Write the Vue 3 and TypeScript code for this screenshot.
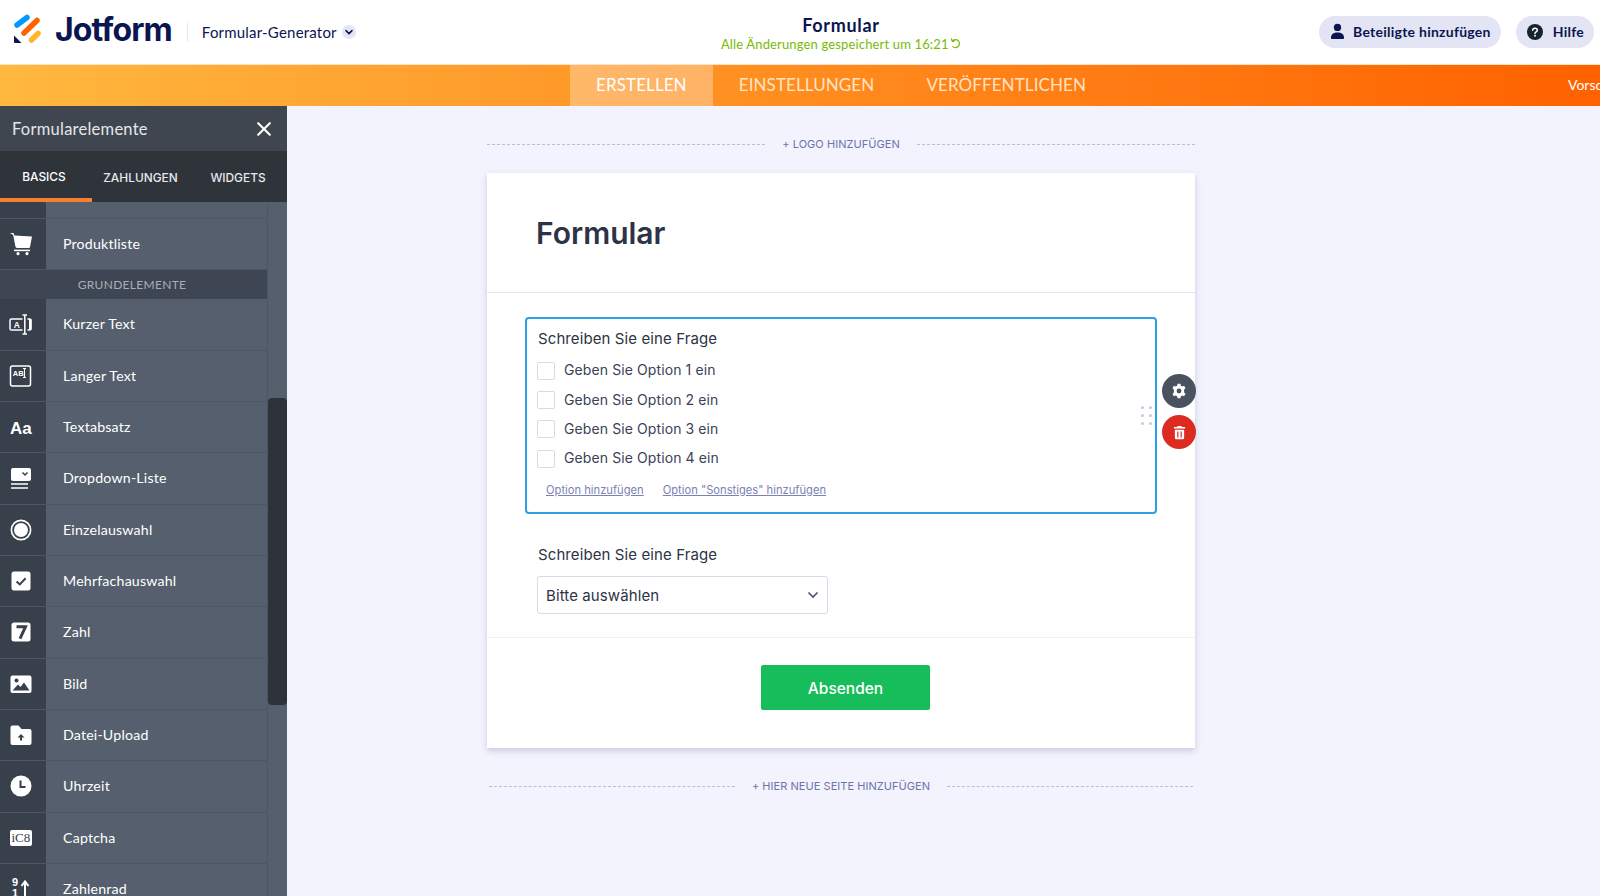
<template>
  <div class="page">
    <header class="topbar">
      <div class="brand">
        <svg class="logo" viewBox="0 0 28 30" width="28" height="30">
          <line x1="4" y1="11" x2="14" y2="3.5" stroke="#0099ff" stroke-width="5.5" stroke-linecap="round" />
          <line x1="11" y1="19" x2="24" y2="6.5" stroke="#ff6100" stroke-width="5.5" stroke-linecap="round" />
          <line x1="18.5" y1="26" x2="25" y2="19.5" stroke="#ffb629" stroke-width="5.5" stroke-linecap="round" />
          <path d="M1 21.5 L1 28 Q1 29 2 29 L8.5 29 Z" fill="#0a1551" />
        </svg>
        <span class="wordmark">Jotform</span>
        <span class="brand-sep"></span>
        <span class="builder">Formular-Generator</span>
        <span class="builder-chevron">
          <svg viewBox="0 0 14 14" width="14" height="14"><path d="M4 5.6 L7 8.6 L10 5.6" fill="none" stroke="#0a1551" stroke-width="1.5" stroke-linecap="round" stroke-linejoin="round" /></svg>
        </span>
      </div>
      <div class="doc-title">
        <div class="doc-name">Formular</div>
        <div class="doc-status">
          Alle Änderungen gespeichert um 16:21
          <svg class="saved-icon" viewBox="0 0 12 12" width="11" height="11"><path d="M2.6 3.2 A4.4 4.4 0 1 1 3 9.4 M1.6 1 L2.4 3.6 L5 3.2" fill="none" stroke="#78bb07" stroke-width="1.3" stroke-linecap="round" stroke-linejoin="round" /></svg>
        </div>
      </div>
      <div class="top-actions">
        <button class="pill pill-invite">
          <svg viewBox="0 0 16 18" width="15" height="17"><circle cx="8" cy="4.6" r="3.9" fill="#0a1551" /><path d="M1 16.2 C1 11.6 4 10 8 10 C12 10 15 11.6 15 16.2 Q15 17 14 17 L2 17 Q1 17 1 16.2 Z" fill="#0a1551" /></svg>
          Beteiligte hinzufügen
        </button>
        <button class="pill pill-help">
          <svg viewBox="0 0 16 16" width="16" height="16"><circle cx="8" cy="8" r="8" fill="#16232f" /><path d="M5.7 6.2 C5.8 3.6 10.3 3.7 10.3 6.2 C10.3 7.8 8 7.8 8 9.4" fill="none" stroke="#fff" stroke-width="1.5" stroke-linecap="round" /><circle cx="8" cy="11.8" r="0.95" fill="#fff" /></svg>
          Hilfe
        </button>
      </div>
    </header>

    <nav class="modebar">
      <a class="mode active">ERSTELLEN</a>
      <a class="mode">EINSTELLUNGEN</a>
      <a class="mode">VERÖFFENTLICHEN</a>
      <span class="preview">Vorschau</span>
    </nav>

    <div class="workspace">
      <aside class="sidebar">
        <div class="side-title">
          <span>Formularelemente</span>
          <svg viewBox="0 0 14 14" width="14" height="14"><path d="M1.2 1.2 L12.8 12.8 M12.8 1.2 L1.2 12.8" stroke="#fff" stroke-width="2.1" stroke-linecap="round" /></svg>
        </div>
        <div class="side-tabs">
          <span class="side-tab current">BASICS</span>
          <span class="side-tab zahl">ZAHLUNGEN</span>
          <span class="side-tab wid">WIDGETS</span>
        </div>
        <div class="side-body">
          <div class="side-list">
            <div class="row row-cut"><div class="row-icon"></div><div class="row-label"></div></div>
            <template v-for="item in elements" :key="item.label">
              <div v-if="item.heading" class="side-heading">{{ item.label }}</div>
              <div v-else class="row">
                <div class="row-icon">
                  <svg viewBox="0 0 24 24" width="24" height="24">
                    <template v-if="item.icon === 'cart'">
                      <path d="M1 1 L4.5 1 L5.6 3.6 L23 4.5 L21 15 Q20.8 16 19.8 16 L8 16 Q6.6 16 6.4 14.6 L4.2 3 Z" fill="#fff" />
                      <path d="M5 18.4 L21 18.4" stroke="#fff" stroke-width="1.6" />
                      <circle cx="9" cy="21.6" r="1.6" fill="#fff" /><circle cx="18" cy="21.6" r="1.6" fill="#fff" />
                    </template>
                    <template v-else-if="item.icon === 'short'">
                      <rect x="1" y="7" width="21" height="11" rx="1.6" fill="none" stroke="#fff" stroke-width="1.5" />
                      <rect x="13.5" y="2" width="5" height="21" fill="#37404b" />
                      <path d="M13.5 3 L18 3 M15.8 3 L15.8 22 M13.5 22 L18 22" stroke="#fff" stroke-width="1.5" fill="none" />
                      <rect x="20" y="7" width="2.4" height="11" fill="#fff" />
                      <text x="7.8" y="16" class="svg-tiny">A</text>
                    </template>
                    <template v-else-if="item.icon === 'long'">
                      <rect x="1.5" y="2" width="20" height="20" rx="2" fill="none" stroke="#fff" stroke-width="1.5" />
                      <text x="3.8" y="12" class="svg-micro">AB</text>
                      <path d="M14 4.5 L17 4.5 M15.5 4.5 L15.5 13.5 M14 13.5 L17 13.5" stroke="#fff" stroke-width="1.1" fill="none" />
                    </template>
                    <text v-else-if="item.icon === 'para'" x="1" y="18.5" class="svg-aa">Aa</text>
                    <template v-else-if="item.icon === 'dropdown'">
                      <rect x="2" y="2" width="20" height="13" rx="2" fill="#fff" />
                      <path d="M13.5 6.5 L16 9 L18.5 6.5" fill="none" stroke="#37404b" stroke-width="1.5" />
                      <path d="M2 18 L19 18 M2 22 L19 22" stroke="#fff" stroke-width="1.7" />
                    </template>
                    <template v-else-if="item.icon === 'radio'">
                      <circle cx="12" cy="12" r="9.6" fill="none" stroke="#fff" stroke-width="1.7" />
                      <circle cx="12" cy="12" r="7" fill="#fff" />
                    </template>
                    <template v-else-if="item.icon === 'check'">
                      <rect x="2.5" y="2.5" width="19" height="19" rx="2.5" fill="#fff" />
                      <path d="M7.5 12.4 L10.8 15.4 L16.6 9.2" fill="none" stroke="#37404b" stroke-width="2" />
                    </template>
                    <template v-else-if="item.icon === 'number'">
                      <rect x="2.5" y="2.5" width="19" height="19" rx="2.5" fill="#fff" />
                      <path d="M7.5 6.8 L16.5 6.8 L11 18.6" fill="none" stroke="#37404b" stroke-width="3" />
                    </template>
                    <template v-else-if="item.icon === 'image'">
                      <rect x="1.5" y="3.5" width="21" height="17.5" rx="2" fill="#fff" />
                      <circle cx="7.5" cy="8.5" r="2" fill="#37404b" />
                      <path d="M3.5 18.5 L9 12.5 L11.5 15 L15 10.5 L20.5 18.5 Z" fill="#37404b" />
                    </template>
                    <template v-else-if="item.icon === 'upload'">
                      <path d="M1.5 4.5 Q1.5 2.5 3.5 2.5 L9.5 2.5 L12.5 6 L20.5 6 Q22.5 6 22.5 8 L22.5 20 Q22.5 22 20.5 22 L3.5 22 Q1.5 22 1.5 20 Z" fill="#fff" />
                      <path d="M8.5 14.5 L12 11 L15.5 14.5 L13 14.5 L13 17.5 L11 17.5 L11 14.5 Z" fill="#37404b" />
                    </template>
                    <template v-else-if="item.icon === 'clock'">
                      <circle cx="12" cy="12" r="10.5" fill="#fff" />
                      <path d="M11.5 6.5 L11.5 13 L16.5 13" fill="none" stroke="#37404b" stroke-width="2" />
                    </template>
                    <template v-else-if="item.icon === 'captcha'">
                      <rect x="1" y="4" width="22" height="16" rx="2" fill="#fff" />
                      <text x="2.5" y="16" class="svg-captcha">iC8</text>
                    </template>
                    <template v-else-if="item.icon === 'spinner'">
                      <text x="3" y="9" class="svg-spin">9</text>
                      <text x="3" y="20" class="svg-spin">1</text>
                      <path d="M16 21 L16 5 M12.5 9 L16 4.5 L19.5 9" fill="none" stroke="#fff" stroke-width="2" />
                    </template>
                  </svg>
                </div>
                <div class="row-label">{{ item.label }}</div>
              </div>
            </template>
          </div>
          <div class="side-scroll"><div class="side-thumb"></div></div>
        </div>
      </aside>

      <main class="canvas">
        <div class="add-line add-logo">
          <span class="dash"></span>
          <span class="add-text">+ LOGO HINZUFÜGEN</span>
          <span class="dash"></span>
        </div>

        <section class="form-card">
          <div class="form-head">
            <h1>Formular</h1>
          </div>

          <div class="field-area">
            <div class="question selected">
              <div class="q-label">Schreiben Sie eine Frage</div>
              <div v-for="n in 4" :key="n" class="option">
                <span class="box"></span>
                <span>Geben Sie Option {{ n }} ein</span>
              </div>
              <div class="opt-links">
                <a>Option hinzufügen</a>
                <a>Option "Sonstiges" hinzufügen</a>
              </div>
              <div class="drag-dots"><i v-for="n in 6" :key="n"></i></div>
              <div class="tool tool-gear">
                <svg viewBox="0 0 16 16" width="16" height="16">
                  <path d="M6.6 0.8 L9.4 0.8 L9.9 2.7 L11.2 3.4 L13.1 2.8 L14.5 5.2 L13.1 6.6 L13.1 9.4 L14.5 10.8 L13.1 13.2 L11.2 12.6 L9.9 13.3 L9.4 15.2 L6.6 15.2 L6.1 13.3 L4.8 12.6 L2.9 13.2 L1.5 10.8 L2.9 9.4 L2.9 6.6 L1.5 5.2 L2.9 2.8 L4.8 3.4 L6.1 2.7 Z" fill="#fff" />
                  <circle cx="8" cy="8" r="2.4" fill="#4a5260" />
                </svg>
              </div>
              <div class="tool tool-trash">
                <svg viewBox="0 0 14 16" width="13" height="15">
                  <path d="M5 1 L9 1 L9.6 2.2 L13 2.2 L13 3.8 L1 3.8 L1 2.2 L4.4 2.2 Z" fill="#fff" />
                  <path d="M2 5 L12 5 L12 14 Q12 15.4 10.6 15.4 L3.4 15.4 Q2 15.4 2 14 Z" fill="#fff" />
                  <path d="M5.2 7 L5.2 13.4 M8.8 7 L8.8 13.4" stroke="#dc2b20" stroke-width="1.3" />
                </svg>
              </div>
            </div>

            <div class="question plain">
              <div class="q-label">Schreiben Sie eine Frage</div>
              <div class="select">
                <span>Bitte auswählen</span>
                <svg viewBox="0 0 12 8" width="12" height="8"><path d="M1.5 1.5 L6 6 L10.5 1.5" fill="none" stroke="#4a5578" stroke-width="1.7" /></svg>
              </div>
            </div>
          </div>

          <div class="form-foot">
            <button class="submit">Absenden</button>
          </div>
        </section>

        <div class="add-line add-page">
          <span class="dash"></span>
          <span class="add-text">+ HIER NEUE SEITE HINZUFÜGEN</span>
          <span class="dash"></span>
        </div>
      </main>
    </div>
  </div>
</template>

<script setup lang="ts">
interface FormElement {
  label: string
  icon?: string
  heading?: boolean
}

const elements: FormElement[] = [
  { label: 'Produktliste', icon: 'cart' },
  { label: 'GRUNDELEMENTE', heading: true },
  { label: 'Kurzer Text', icon: 'short' },
  { label: 'Langer Text', icon: 'long' },
  { label: 'Textabsatz', icon: 'para' },
  { label: 'Dropdown-Liste', icon: 'dropdown' },
  { label: 'Einzelauswahl', icon: 'radio' },
  { label: 'Mehrfachauswahl', icon: 'check' },
  { label: 'Zahl', icon: 'number' },
  { label: 'Bild', icon: 'image' },
  { label: 'Datei-Upload', icon: 'upload' },
  { label: 'Uhrzeit', icon: 'clock' },
  { label: 'Captcha', icon: 'captcha' },
  { label: 'Zahlenrad', icon: 'spinner' }
]
</script>

<style>
html,
body {
  margin: 0;
  background: #f3f3fe;
}
</style>

<style scoped>
.page {
  width: 1600px;
  height: 896px;
  overflow: hidden;
  display: flex;
  flex-direction: column;
  font-family: Lato, "Liberation Sans", sans-serif;
  color: #0a1551;
}

.topbar {
  height: 65px;
  flex: none;
  display: grid;
  grid-template-columns: 700px 282px 1fr;
  align-items: center;
  background: #fff;
  border-bottom: 1px solid #ffe3c4;
  box-sizing: border-box;
}

.brand {
  display: flex;
  align-items: center;
  padding-left: 13px;
}

.logo {
  margin-top: -7px;
}

.wordmark {
  margin: -5px 0 0 14px;
  font-family: Inter, sans-serif;
  font-size: 32px;
  font-weight: 700;
  letter-spacing: -0.9px;
  color: #0a1551;
}

.brand-sep {
  width: 1px;
  height: 19px;
  margin: 0 14px 0 15px;
  background: #e6e7f0;
}

.builder {
  font-size: 15px;
  letter-spacing: 0.2px;
  color: #0a1551;
}

.builder-chevron {
  width: 14px;
  height: 14px;
  margin: -1px 0 0 5px;
  border-radius: 50%;
  background: #e3e5f5;
  display: flex;
}

.doc-title {
  text-align: center;
  margin-top: 1px;
}

.doc-name {
  font-size: 18px;
  font-weight: 700;
  line-height: 22px;
  letter-spacing: 0.7px;
}

.doc-status {
  font-size: 13px;
  line-height: 16px;
  color: #78bb07;
  letter-spacing: 0.15px;
}

.saved-icon {
  margin-left: -2px;
}

.top-actions {
  display: flex;
  justify-content: flex-end;
  gap: 15px;
  padding-right: 6px;
  margin-top: -1px;
}

.pill {
  height: 32px;
  border: 0;
  border-radius: 16px;
  background: #e3e5f5;
  display: flex;
  align-items: center;
  gap: 8px;
  padding: 0 10px 0 11px;
  font: 700 14px Lato, sans-serif;
  letter-spacing: 0.25px;
  color: #0a1551;
}

.pill-help {
  gap: 10px;
}

.modebar {
  height: 41px;
  flex: none;
  display: flex;
  align-items: stretch;
  padding-left: 570px;
  background: linear-gradient(90deg, #ffb83f 0%, #ff6100 100%);
  position: relative;
  font-size: 17px;
  letter-spacing: 0.1px;
}

.mode {
  display: flex;
  align-items: center;
  padding: 0 26px 2px;
  color: #ffe3c4;
}

.mode.active {
  background: rgba(255, 255, 255, 0.3);
  color: #fff;
}

.preview {
  position: absolute;
  left: 1568px;
  top: 11px;
  font-size: 14px;
  letter-spacing: 0;
  color: #fff;
  white-space: nowrap;
}

.workspace {
  flex: 1;
  min-height: 0;
  display: flex;
}

.sidebar {
  width: 287px;
  flex: none;
  display: flex;
  flex-direction: column;
  background: #555f6e;
  color: #fff;
}

.side-title {
  height: 45px;
  flex: none;
  box-sizing: border-box;
  display: flex;
  align-items: center;
  justify-content: space-between;
  padding: 1px 16px 0 12px;
  background: #40464f;
  font-size: 16.5px;
  letter-spacing: 0.25px;
  color: #e4e6ea;
}

.side-tabs {
  height: 51px;
  flex: none;
  display: flex;
  background: #2f343b;
  font-family: Inter, sans-serif;
  font-size: 11.9px;
  font-weight: 500;
  color: #e6e8eb;
}

.side-tab {
  display: flex;
  align-items: center;
  justify-content: center;
  box-sizing: border-box;
  padding-top: 1px;
}

.side-tab.current {
  width: 92px;
  border-bottom: 4px solid #f5812f;
  padding-top: 4px;
  padding-right: 4px;
  color: #fff;
}

.side-tab.zahl {
  width: 97px;
}

.side-tab.wid {
  width: 98px;
}

.side-body {
  flex: 1;
  min-height: 0;
  display: flex;
}

.side-list {
  width: 268px;
  flex: none;
  overflow: hidden;
}

.row {
  height: 51.33px;
  box-sizing: border-box;
  display: flex;
  border-bottom: 1px solid #4c5665;
}

.row-cut {
  height: 17px;
}

.row-icon {
  width: 46px;
  flex: none;
  background: #37404b;
  display: flex;
  align-items: center;
  justify-content: center;
  padding-right: 5px;
  box-sizing: border-box;
}

.row-label {
  flex: 1;
  display: flex;
  align-items: center;
  padding: 0 0 1px 17px;
  background: #555f6e;
  font-size: 14.2px;
  letter-spacing: 0.18px;
  color: #fff;
}

.side-heading {
  height: 29px;
  display: flex;
  align-items: center;
  justify-content: center;
  padding-right: 4px;
  background: #3f4653;
  font-size: 12px;
  letter-spacing: 0.3px;
  color: #a9aeb8;
}

.side-scroll {
  flex: 1;
  padding-top: 196px;
  border-left: 1px solid #4c5665;
  margin-left: -1px;
}

.side-thumb {
  height: 307px;
  background: #2e3339;
  border-radius: 4px;
}

.svg-tiny,
.svg-micro,
.svg-aa,
.svg-captcha,
.svg-spin {
  font-family: "Liberation Sans", sans-serif;
  fill: #fff;
}

.svg-tiny {
  font-size: 8.5px;
  font-weight: 700;
  text-anchor: middle;
}

.svg-micro {
  font-size: 7.5px;
  font-weight: 700;
}

.svg-aa {
  font-size: 17px;
  font-weight: 700;
}

.svg-captcha {
  font-family: "Liberation Serif", serif;
  font-size: 13px;
  fill: #37404b;
}

.svg-spin {
  font-size: 11px;
  font-weight: 700;
}

.canvas {
  flex: 1;
  min-width: 0;
  display: flex;
  flex-direction: column;
  align-items: center;
  background: #f3f3fe;
  padding: 26px 205px 0 0;
  font-family: Inter, sans-serif;
}

.add-line {
  width: 708px;
  display: flex;
  align-items: center;
  gap: 17px;
  height: 24px;
}

.dash {
  flex: 1;
  border-top: 1px dashed #b9bcdc;
}

.add-text {
  font-size: 11px;
  letter-spacing: 0.05px;
  color: #6c73a8;
  white-space: nowrap;
}

.add-line.add-logo {
  margin-bottom: 17px;
}

.add-line.add-page {
  margin-top: 26px;
  padding: 0 2px;
  box-sizing: border-box;
}

.form-card {
  width: 708px;
  height: 575px;
  background: #fff;
  box-shadow: 0 3px 6px rgba(60, 65, 110, 0.22);
  display: flex;
  flex-direction: column;
}

.form-head {
  height: 120px;
  flex: none;
  box-sizing: border-box;
  border-bottom: 1px solid #e3e5f0;
  padding: 42px 0 0 49px;
}

.form-head h1 {
  margin: 0;
  font-size: 30px;
  line-height: 36px;
  font-weight: 600;
  color: #2c3345;
}

.field-area {
  height: 345px;
  flex: none;
  box-sizing: border-box;
  padding: 24px 38px 0;
  border-bottom: 1px solid #f1f1f6;
}

.question {
  position: relative;
  box-sizing: border-box;
  color: #2c3345;
}

.question.selected {
  height: 197px;
  border: 2px solid #2ba0e4;
  border-radius: 4px;
  padding: 9px 10px 0;
}

.question.plain {
  padding: 30px 12px 0;
}

.q-label {
  margin: 0 0 5px 1px;
  font-size: 15px;
  font-weight: 400;
  letter-spacing: 0.1px;
  line-height: 22px;
}

.option {
  display: flex;
  align-items: center;
  gap: 9px;
  height: 29.4px;
  font-size: 14px;
  letter-spacing: 0.1px;
  color: #3b4256;
}

.box {
  width: 18px;
  height: 18px;
  box-sizing: border-box;
  border: 1px solid #d8dae9;
  border-radius: 2px;
  margin-top: 2px;
}

.opt-links {
  display: flex;
  gap: 19px;
  margin-top: 10px;
  padding-left: 9px;
  font-size: 11.2px;
  color: #7c81b5;
}

.opt-links a {
  text-decoration: underline;
}

.drag-dots {
  position: absolute;
  right: 3px;
  top: 87px;
  display: grid;
  grid-template-columns: 3px 3px;
  gap: 5px;
}

.drag-dots i {
  width: 3px;
  height: 3px;
  border-radius: 50%;
  background: #c8cbdf;
}

.tool {
  position: absolute;
  left: 635px;
  width: 34px;
  height: 34px;
  border-radius: 50%;
  display: flex;
  align-items: center;
  justify-content: center;
}

.tool-gear {
  top: 55px;
  background: #4a5260;
}

.tool-trash {
  top: 96px;
  background: #dc2b20;
}

.select {
  width: 291px;
  height: 38px;
  margin-top: 10px;
  box-sizing: border-box;
  border: 1px solid #d8dae9;
  border-radius: 3px;
  display: flex;
  align-items: center;
  justify-content: space-between;
  padding: 0 8px;
  font-size: 15px;
  letter-spacing: 0.1px;
  color: #2c3345;
}

.form-foot {
  flex: 1;
  display: flex;
  justify-content: center;
  padding: 27px 0 0 9px;
}

.submit {
  width: 169px;
  height: 45px;
  border: 0;
  border-radius: 2px;
  padding: 1px 0 0;
  background: #18bd5b;
  color: #fff;
  font: 500 15.5px Inter, sans-serif;
}
</style>
